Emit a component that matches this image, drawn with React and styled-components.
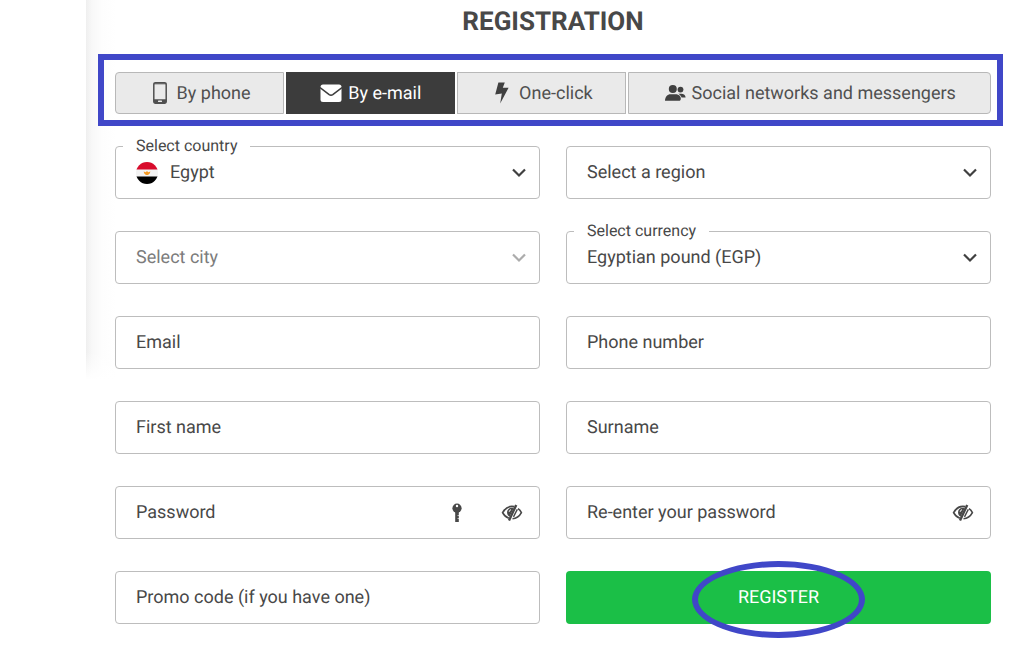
import React, { useState } from "react";
import styled, { createGlobalStyle } from "styled-components";

const GlobalStyle = createGlobalStyle`
  *,
  *::after {
    box-sizing: border-box;
  }

  body {
    margin: 0;
    background: #fff;
    color: #484848;
    font-family: Roboto, "Liberation Sans", sans-serif;
    font-size: 18px;
    text-rendering: geometricPrecision;
  }

  button,
  input,
  select {
    font: inherit;
    color: inherit;
    text-rendering: inherit;
  }
`;

const Page = styled.main`
  min-height: 100vh;
  padding: 6px 21px 29px 98px;
  background:
    linear-gradient(to bottom, rgba(255, 255, 255, 0), #fff) 86px 352px / 30px
      28px no-repeat,
    linear-gradient(to right, #efefef, #f8f8f8 6px, #fdfdfd 16px, #fff) 86px 0 /
      30px 380px no-repeat;
`;

const Title = styled.h1`
  margin: 0 0 16px;
  padding: 0 12px 0 17px;
  font-size: 26px;
  line-height: 32px;
  font-weight: 700;
  text-align: center;
  text-transform: uppercase;
`;

const TabsFrame = styled.div`
  padding: 12px 6px 6px 11px;
  border: 6px solid #4047c8;
`;

const Tabs = styled.div`
  display: grid;
  grid-template-columns: 7fr 7fr 7fr 15fr;
  gap: 2px;
`;

const Tab = styled.button`
  display: flex;
  justify-content: center;
  align-items: center;
  gap: 6px;
  height: 42px;
  padding: 0;
  border: 1px solid ${({ $active }) => ($active ? "#3c3c3c" : "#b8b8b8")};
  background: ${({ $active }) => ($active ? "#3c3c3c" : "#eaeaea")};
  color: ${({ $active }) => ($active ? "#fff" : "#505050")};
  white-space: nowrap;
  cursor: pointer;

  &:first-child {
    border-radius: 4px 0 0 4px;
  }

  &:last-child {
    border-radius: 0 4px 4px 0;
  }
`;

const Form = styled.form`
  display: grid;
  grid-template-columns: 1fr 1fr;
  gap: 32px 26px;
  padding: 20px 12px 0 17px;
`;

const Field = styled.div`
  position: relative;
  display: flex;
  align-items: center;
  height: 53px;
  border: 1px solid #bdbdbd;
  border-radius: 4px;
  color: ${({ $muted }) => ($muted ? "#7c7c7c" : "inherit")};
`;

const FloatingLabel = styled.label`
  position: absolute;
  top: -11px;
  left: 7px;
  padding: 0 13px;
  background: #fff;
  font-size: 16px;
  line-height: 20px;
`;

const SelectBox = styled.div`
  flex: 1;
  display: grid;
  grid-template-columns: 20px 22px 1fr auto 12px;
  align-items: center;
  height: 100%;

  > * {
    grid-row: 1;
  }
`;

const Select = styled.select`
  grid-column: 1 / -1;
  width: 100%;
  height: 100%;
  padding: 0 40px 0 ${({ $flag }) => ($flag ? "54px" : "20px")};
  border: 0;
  outline: 0;
  appearance: none;
  background: transparent;
`;

const Input = styled.input`
  flex: 1;
  min-width: 0;
  height: 100%;
  padding: 0 20px;
  border: 0;
  outline: 0;
  background: transparent;

  &::placeholder {
    color: inherit;
    opacity: 1;
  }
`;

const IconButton = styled.button`
  display: flex;
  justify-content: center;
  align-items: center;
  width: 55px;
  height: 100%;
  padding: 0;
  border: 0;
  background: none;
  cursor: pointer;
`;

const Svg = styled.svg`
  flex: none;
  display: block;
`;

const FlagSvg = styled(Svg)`
  grid-column: 2;
  pointer-events: none;
`;

const ChevronSvg = styled(Svg)`
  grid-column: 4;
  color: ${({ $muted }) => ($muted ? "#acacac" : "#404040")};
  pointer-events: none;
`;

const RegisterButton = styled.button`
  position: relative;
  height: 53px;
  border: 0;
  border-radius: 4px;
  background: #1bbf47;
  color: #fff;
  text-transform: uppercase;
  cursor: pointer;

  &::after {
    content: "";
    position: absolute;
    top: -10px;
    left: 50%;
    width: 173px;
    height: 77px;
    margin-left: -87px;
    border: 6px solid #4047c8;
    border-radius: 50%;
  }
`;

const PhoneIcon = () => (
  <Svg width="22" height="22" viewBox="0 0 22 22" aria-hidden="true">
    <rect x="4.8" y="0.8" width="12.4" height="20.4" rx="1.6" fill="none" stroke="currentColor" strokeWidth="1.5" />
    <path d="M4.5 17.2h13v2.6a1.7 1.7 0 0 1-1.7 1.7H6.2a1.7 1.7 0 0 1-1.7-1.7z" fill="currentColor" />
    <rect x="9" y="18.5" width="4" height="1.6" rx="0.6" fill="#eaeaea" />
    <path d="M4.5 1.8h13" stroke="currentColor" strokeWidth="1" />
  </Svg>
);

const MailIcon = () => (
  <Svg width="22" height="22" viewBox="0 0 22 22" aria-hidden="true">
    <rect x="0.5" y="2.5" width="21" height="17.5" rx="2.5" fill="currentColor" />
    <path d="M0 5.6l9.2 7.1q1.8 1.3 3.6 0L22 5.6" fill="none" stroke="#3c3c3c" strokeWidth="1.5" />
  </Svg>
);

const BoltIcon = () => (
  <Svg width="22" height="22" viewBox="0 0 22 22" aria-hidden="true">
    <path d="M7.4 0.4h6.4L11.8 5.7h5.8L9.2 21.6l1.6-10.2-6.6 1z" fill="#404040" />
  </Svg>
);

const UsersIcon = () => (
  <Svg width="22" height="22" viewBox="0 0 22 22" aria-hidden="true">
    <g fill="#404040">
      <circle cx="8.8" cy="7" r="4" />
      <circle cx="16.5" cy="7.6" r="2.9" />
      <path d="M1 18.8c0-4 2.5-6.6 5.5-6.6h5c2.8 0 5.3 1.6 5.3 4.2 0 1.6-.6 2.4-1.8 2.4z" />
      <path d="M14.2 11.7h3c2.6 0 4.4 1.3 4.4 3.9h-4c-.5-1.7-1.6-3-3.4-3.9z" />
    </g>
  </Svg>
);

const ChevronIcon = ({ muted }) => (
  <ChevronSvg $muted={muted} width="16" height="16" viewBox="0 0 16 16" aria-hidden="true">
    <path d="M2 4.5l6 6 6-6" fill="none" stroke="currentColor" strokeWidth="2.2" />
  </ChevronSvg>
);

const EgyptFlag = () => (
  <FlagSvg width="22" height="22" viewBox="0 0 22 22" aria-hidden="true">
    <clipPath id="flag">
      <circle cx="11" cy="11" r="11" />
    </clipPath>
    <g clipPath="url(#flag)">
      <path d="M0 0h22v22H0z" fill="#f3f3f3" />
      <path d="M0 0h22v7.4H0z" fill="#d80b2c" />
      <path d="M0 14.6h22V22H0z" fill="#000" />
      <path d="M7.6 9.4l2.2.8 1.2-1.2 1.2 1.2 2.2-.8-.7 2.2-1.7 1.4h-2l-1.7-1.4z" fill="#f59a23" />
    </g>
  </FlagSvg>
);

const KeyIcon = () => (
  <Svg width="12" height="20" viewBox="0 0 12 20" aria-hidden="true">
    <circle cx="6" cy="5.2" r="4.6" fill="currentColor" />
    <path d="M4.2 8h3.6v11H4.2z" fill="currentColor" />
    <circle cx="6" cy="3" r="1.2" fill="#fff" />
    <path d="M7.8 12.5H6.6M7.8 15.5H6.6" stroke="#fff" strokeWidth="0.8" />
  </Svg>
);

const EyeOffIcon = () => (
  <Svg width="22" height="18" viewBox="0 0 22 18" aria-hidden="true">
    <path d="M13.2 2.7C7.8 1.7 3.8 4.7 1.6 8.7c1.4 2.7 3.6 4.6 6.2 5.5" fill="none" stroke="currentColor" strokeWidth="1.7" />
    <path d="M17 4.6c1.5 1 2.6 2.4 3.4 4.1-2 3.7-4.9 5.9-8.9 6" fill="none" stroke="currentColor" strokeWidth="1.6" />
    <path d="M12.8 4C8.3 3.2 5.7 5.8 6.1 9c.2 1.7 1 3 2.5 3.8z" fill="currentColor" />
    <path d="M15.2 1L8 16.6" stroke="currentColor" strokeWidth="2.4" />
    <path d="M16.3 5.4l-3.8 7.5" stroke="currentColor" strokeWidth="1.4" />
    <path d="M8.2 7.8q.1-1.7 1.8-2.1" fill="none" stroke="#fff" strokeWidth="1" />
  </Svg>
);

const TABS = [
  { id: "phone", label: "By phone", Icon: PhoneIcon },
  { id: "email", label: "By e-mail", Icon: MailIcon },
  { id: "click", label: "One-click", Icon: BoltIcon },
  { id: "social", label: "Social networks and messengers", Icon: UsersIcon },
];

const SelectField = ({ id, label, value, flag, muted }) => (
  <Field $muted={muted}>
    {label && <FloatingLabel htmlFor={id}>{label}</FloatingLabel>}
    <SelectBox>
      {flag && <EgyptFlag />}
      <Select id={id} $flag={flag} aria-label={label ? undefined : value}>
        <option>{value}</option>
      </Select>
      <ChevronIcon muted={muted} />
    </SelectBox>
  </Field>
);

const TextField = ({ label, type = "text", children }) => (
  <Field>
    <Input type={type} placeholder={label} aria-label={label} />
    {children}
  </Field>
);

const PasswordField = ({ label, generate }) => {
  const [visible, setVisible] = useState(false);
  return (
    <TextField label={label} type={visible ? "text" : "password"}>
      {generate && (
        <IconButton type="button" aria-label="Generate password">
          <KeyIcon />
        </IconButton>
      )}
      <IconButton
        type="button"
        aria-label="Show password"
        onClick={() => setVisible(!visible)}
      >
        <EyeOffIcon />
      </IconButton>
    </TextField>
  );
};

function App() {
  const [tab, setTab] = useState("email");
  return (
    <>
      <GlobalStyle />
      <Page>
        <Title>Registration</Title>
        <TabsFrame>
          <Tabs>
            {TABS.map(({ id, label, Icon }) => (
              <Tab
                key={id}
                type="button"
                $active={tab === id}
                aria-pressed={tab === id}
                onClick={() => setTab(id)}
              >
                <Icon />
                {label}
              </Tab>
            ))}
          </Tabs>
        </TabsFrame>
        <Form onSubmit={(e) => e.preventDefault()}>
          <SelectField id="country" label="Select country" value="Egypt" flag />
          <SelectField id="region" value="Select a region" />
          <SelectField id="city" value="Select city" muted />
          <SelectField
            id="currency"
            label="Select currency"
            value="Egyptian pound (EGP)"
          />
          <TextField label="Email" type="email" />
          <TextField label="Phone number" type="tel" />
          <TextField label="First name" />
          <TextField label="Surname" />
          <PasswordField label="Password" generate />
          <PasswordField label="Re-enter your password" />
          <TextField label="Promo code (if you have one)" />
          <RegisterButton type="submit">Register</RegisterButton>
        </Form>
      </Page>
    </>
  );
}

export default App;
